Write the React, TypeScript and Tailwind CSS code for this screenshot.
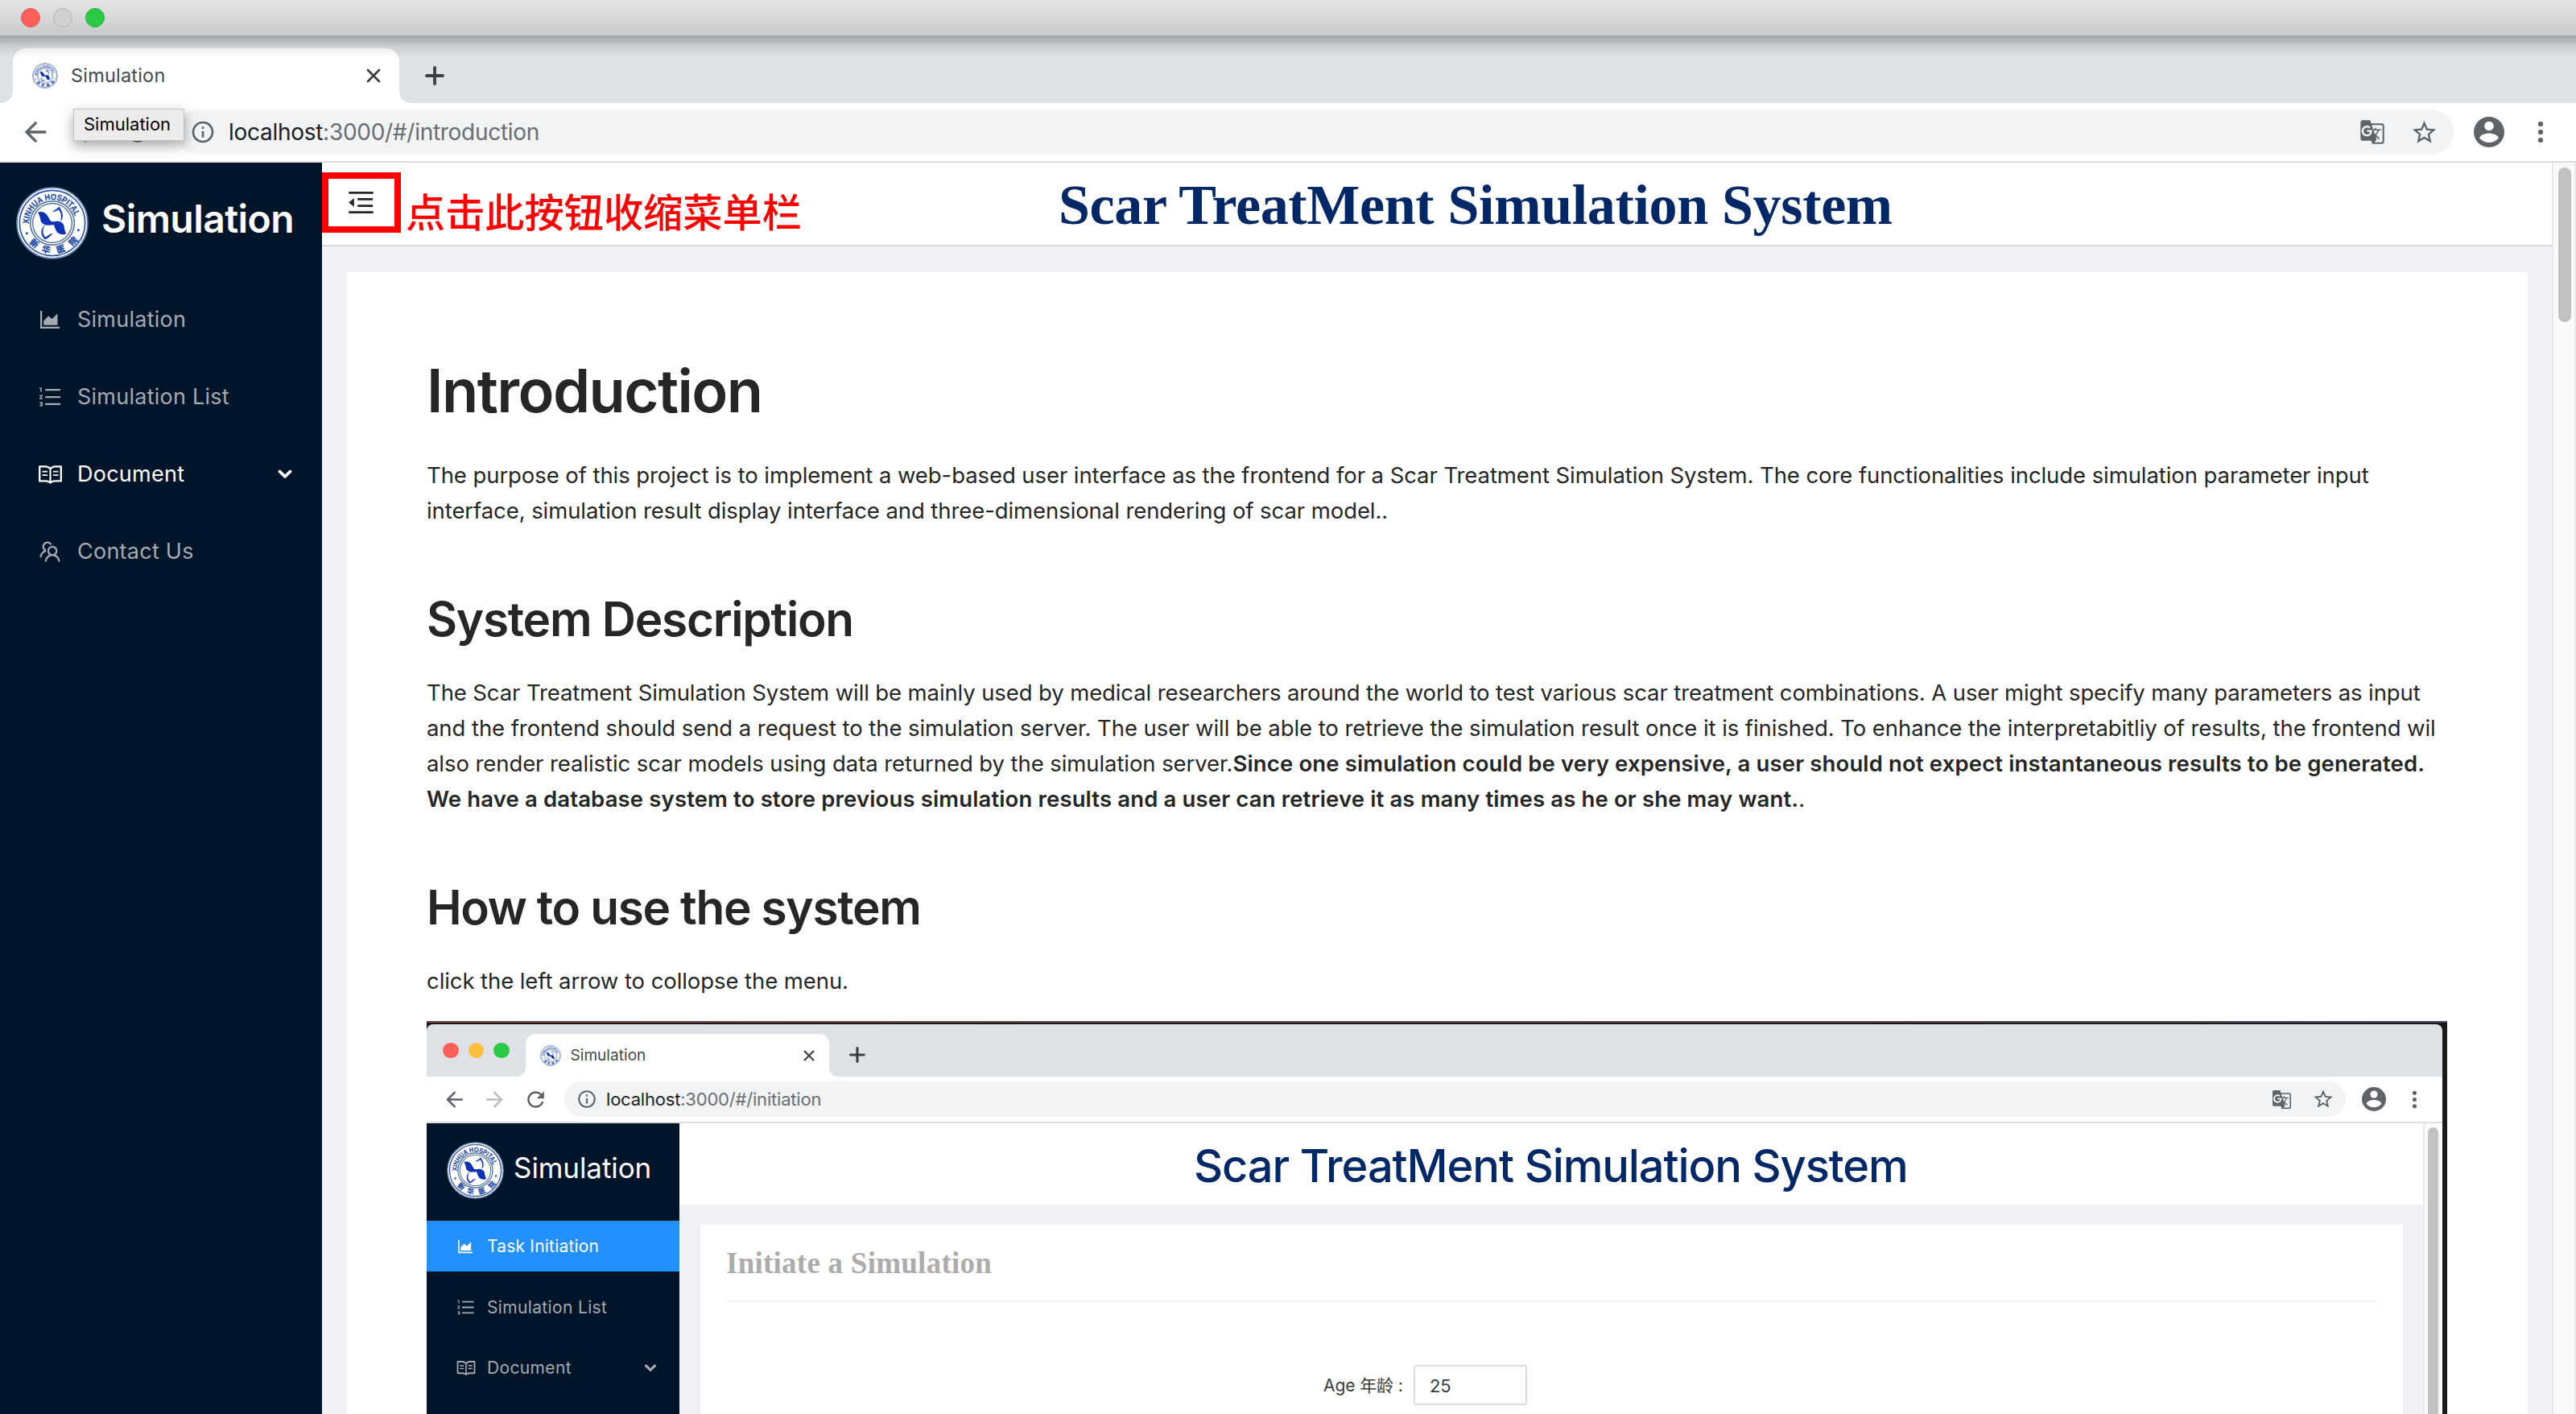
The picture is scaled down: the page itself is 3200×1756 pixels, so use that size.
import React from "react";
import {
  AiOutlineAreaChart,
  AiOutlineMenuFold,
  AiOutlineOrderedList,
  AiOutlineRead,
  AiOutlineTeam,
} from "react-icons/ai";
import { MdArrowBack, MdArrowForward, MdGTranslate, MdInfoOutline, MdRefresh, MdStarBorder } from "react-icons/md";

let sealCount = 0;

/* Round hospital emblem with the lettering running around the ring. */
function Seal({ className }: { className: string }) {
  const [id] = React.useState(() => `seal-arc-${sealCount++}`);
  const hanzi = [
    { c: "新", x: -67, y: 76, r: 41 },
    { c: "华", x: -23, y: 99, r: 13 },
    { c: "医", x: 31, y: 97, r: -18 },
    { c: "院", x: 78, y: 68, r: -48 },
  ];
  return (
    <svg className={className} viewBox="30 35 270 270">
      <circle cx="165" cy="170" r="132" fill="#fff" stroke="#5d7fb4" strokeWidth="5" />
      <circle cx="165" cy="170" r="122" fill="none" stroke="#2f55a4" strokeWidth="5" />
      <circle cx="165" cy="170" r="82" fill="none" stroke="#4a6b9c" strokeWidth="4.5" />
      <circle cx="165" cy="170" r="73" fill="none" stroke="#4a6b9c" strokeWidth="4" />
      <path id={id} d="M78 173 A87 87 0 0 1 250 152" fill="none" />
      <text fontFamily="Liberation Sans, sans-serif" fontWeight="700" fontSize="32" fill="#1d47a5" stroke="#1d47a5" strokeWidth="0.6">
        <textPath href={`#${id}`} textLength="250" lengthAdjust="spacingAndGlyphs">
          XINHUA HOSPITAL
        </textPath>
      </text>
      {hanzi.map((h) => (
        <text
          key={h.c}
          transform={`translate(${165 + h.x} ${170 + h.y}) rotate(${h.r})`}
          textAnchor="middle"
          y="11.5"
          fontFamily="Noto Sans CJK SC, sans-serif"
          fontWeight="700"
          fontSize="32"
          fill="#1d47a5"
          stroke="#1d47a5"
          strokeWidth="1"
        >
          {h.c}
        </text>
      ))}
      <circle cx="70" cy="208" r="4.5" fill="#1d47a5" />
      <circle cx="262" cy="196" r="4.5" fill="#1d47a5" />
      <path
        d="M111 130 C125 124 140 131 146 141 C152 151 156 160 160 164 L172 165 C190 160 205 168 208 179 C210 192 213 204 217 210 C204 216 186 211 180 199 C174 190 173 180 171 177 L150 178 C138 179 122 171 121 158 C119 145 115 135 111 130 Z"
        fill="#0b32b4"
      />
      <path d="M165 127 C174 123 183 117 190 109 C206 132 207 150 196 162 C201 144 198 130 188 119 C182 124 174 128 165 127 Z" fill="#0b32b4" stroke="#0b32b4" />
      <path d="M166 210 C158 216 149 228 138 231 C120 215 121 192 136 178 C126 197 128 212 140 224 C147 220 156 209 166 210 Z" fill="#0b32b4" stroke="#0b32b4" />
    </svg>
  );
}

function Close({ className }: { className: string }) {
  return (
    <svg className={className} viewBox="0 0 18 18" stroke="#3c4043" strokeWidth="2.8" strokeLinecap="round">
      <path d="M2 2 L16 16 M16 2 L2 16" />
    </svg>
  );
}

function Plus({ className }: { className: string }) {
  return (
    <svg className={className} viewBox="0 0 24 24" stroke="#3c4043" strokeWidth="3.8" strokeLinecap="round">
      <path d="M12 2 V22 M2 12 H22" />
    </svg>
  );
}

function Account({ className }: { className: string }) {
  return (
    <svg className={className} viewBox="0 0 38 38">
      <circle cx="19" cy="19" r="19" fill="#5f6368" />
      <circle cx="19" cy="11.5" r="5.8" fill="#fff" />
      <path d="M7.3 26.5 C7.3 22.5 14 20.4 19 20.4 S30.7 22.5 30.7 26.5 C27.5 30.5 23 32 19 32 S10.5 30.5 7.3 26.5 Z" fill="#fff" />
    </svg>
  );
}

function Dots({ className }: { className: string }) {
  return (
    <svg className={className} viewBox="0 0 8 28" fill="#5f6368">
      <circle cx="4" cy="4" r="3.1" />
      <circle cx="4" cy="14" r="3.1" />
      <circle cx="4" cy="24" r="3.1" />
    </svg>
  );
}

function Chevron({ className }: { className: string }) {
  return (
    <svg className={className} viewBox="0 0 18 12" fill="none" stroke="currentColor" strokeWidth="3.8" strokeLinecap="round" strokeLinejoin="round">
      <path d="M2.5 2.5 L9 8.8 L15.5 2.5" />
    </svg>
  );
}

/* Concave corner that joins a tab to the toolbar below it. */
function Foot({ className }: { className: string }) {
  return (
    <svg className={className} viewBox="0 0 16 16" fill="#fff">
      <path d="M16 0 V16 H0 C10 16 16 10 16 0 Z" />
    </svg>
  );
}

function MainMenuItem({ icon, label, active }: { icon: React.ReactNode; label: string; active?: boolean }) {
  return (
    <div className={active ? "flex h-24 items-center pl-[46px] text-white" : "flex h-24 items-center pl-[46px] text-[#a3aab1]"}>
      <span className="w-[50px]">{icon}</span>
      <span className="text-[27px] tracking-[0.25px]">{label}</span>
      {active && <Chevron className="ml-auto mr-[37px] h-3 w-[18px]" />}
    </div>
  );
}

function BrowserTop() {
  return (
    <div>
      <div className="flex h-11 items-center gap-4 bg-linear-to-b from-[#e4e5e7] to-[#c8c9cb] pl-[26px]">
        <i className="size-6 rounded-full border border-[#e2544d] bg-[#ff6059]" />
        <i className="size-6 rounded-full border border-[#b4b4b4] bg-[#d0d0d0]" />
        <i className="size-6 rounded-full border border-[#23b03b] bg-[#2bca44]" />
      </div>
      <div className="relative flex h-[84px] items-end bg-[#dee1e6]">
        <Foot className="size-4" />
        <div className="flex h-[68px] w-[480px] items-center rounded-t-2xl bg-white pl-6">
          <Seal className="size-8" />
          <span className="-mt-px ml-4 text-[23.5px] tracking-[0.2px] text-[#45494d]">Simulation</span>
          <Close className="ml-auto mr-[23px] size-[18px]" />
        </div>
        <Foot className="size-4 -scale-x-100" />
        <Plus className="mb-[22px] ml-4 size-6" />
        <div className="absolute inset-x-0 top-0 h-7 bg-linear-to-b from-black/28 via-black/8 to-transparent" />
      </div>
      <div className="relative flex h-[74px] items-center border-b-2 border-[#dadce0] bg-white pb-0 text-[#5f6368]">
        <MdArrowBack className="ml-6 size-10" />
        <MdArrowForward className="ml-[22px] size-10 text-[#babcbe]" />
        <MdRefresh className="ml-[26px] size-[38px]" />
        <div className="ml-7 flex h-14 flex-1 items-center rounded-full bg-[#f1f3f4] pl-[18px]">
          <MdInfoOutline className="size-8" />
          <span className="ml-4 text-[28px] tracking-[-0.28px] text-[#6b6e72]">
            <span className="text-[#202124]">localhost</span>:3000/#/introduction
          </span>
          <MdGTranslate className="ml-auto size-[32px]" />
          <MdStarBorder className="ml-[31px] mr-[19px] size-[35px]" />
        </div>
        <Account className="ml-[25px] size-[38px]" />
        <Dots className="ml-[41px] mr-10 h-7 w-2" />
        <div className="absolute left-[91px] top-[7px] flex h-10 w-[138px] items-center border border-[#c2c2c2] bg-[#ececec] pl-3 text-[22px] text-black shadow-[0_6px_16px_rgba(0,0,0,0.35)]">
          <span className="-mt-[2px]">Simulation</span>
        </div>
      </div>
    </div>
  );
}

function InnerMenuItem({ icon, label, selected, arrow }: { icon: React.ReactNode; label: string; selected?: boolean; arrow?: boolean }) {
  return (
    <div
      className={
        selected
          ? "mb-[7px] flex h-[63px] shrink-0 items-center bg-[#2290ff] pl-[36px] text-white"
          : "mb-3 flex h-[63px] shrink-0 items-center pl-[36px] text-[#a3aab1]"
      }
    >
      <span className="w-[39px]">{icon}</span>
      <span className={selected ? "text-[21px] tracking-[0.2px]" : "text-[21px] tracking-[0.35px]"}>{label}</span>
      {arrow && <Chevron className="ml-auto mr-7 h-[10px] w-4" />}
    </div>
  );
}

/* Illustration of the task page, shown below the instructions. */
function Illustration() {
  return (
    <div className="flex h-[488px] w-[2510px] flex-col overflow-hidden bg-[#1b1a19] pr-[6px]">
      <div className="-mr-[6px] h-[2px] shrink-0 bg-linear-to-r from-[#7a4547] to-[#4b4858]" />
      <div className="mt-[2px] flex h-[65px] shrink-0 items-end rounded-t-lg bg-[#dee1e6]">
        <div className="flex gap-3 self-center pl-5">
          <i className="size-[19.5px] rounded-full bg-[#ff6059]" />
          <i className="size-[19.5px] rounded-full bg-[#febe3e]" />
          <i className="size-[19.5px] rounded-full bg-[#2bca44]" />
        </div>
        <Foot className="ml-[8px] size-3" />
        <div className="flex h-[53px] w-[377px] items-center rounded-t-xl bg-white pl-[18px]">
          <Seal className="size-[26px]" />
          <span className="ml-3 text-[19px] tracking-[0.05px] text-[#45494d]">Simulation</span>
          <Close className="ml-auto mr-[18px] size-[14px]" />
        </div>
        <Foot className="size-3 -scale-x-100" />
        <Plus className="mb-[17px] ml-[13px] size-5" />
      </div>
      <div className="flex h-[58px] shrink-0 items-center border-b-2 border-[#dcdee1] bg-white text-[#5f6368]">
        <MdArrowBack className="ml-[19px] size-[31px]" />
        <MdArrowForward className="ml-[19px] size-[31px] text-[#babcbe]" />
        <MdRefresh className="ml-[20px] size-[31px]" />
        <div className="ml-[20px] flex h-11 flex-1 items-center rounded-full bg-[#f1f3f4] pl-[15px]">
          <MdInfoOutline className="size-[26px]" />
          <span className="ml-[11px] text-[22px] tracking-[-0.2px] text-[#6b6e72]">
            <span className="text-[#202124]">localhost</span>:3000/#/initiation
          </span>
          <MdGTranslate className="ml-auto size-[25px]" />
          <MdStarBorder className="ml-[25px] mr-[14px] size-[28px]" />
        </div>
        <Account className="ml-5 size-[30px]" />
        <Dots className="ml-8 mr-[31px] h-[23px] w-[7px]" />
      </div>
      <div className="flex min-h-0 flex-1">
        <div className="flex w-[314px] flex-col bg-[#001529]">
          <div className="flex h-[121px] shrink-0 items-start pl-[25px] pt-[23px]">
            <Seal className="size-[71px]" />
            <span className="ml-3 text-[35px] leading-[65px] text-white">Simulation</span>
          </div>
          <InnerMenuItem selected icon={<AiOutlineAreaChart className="size-6" />} label="Task Initiation" />
          <div className="h-[6px] shrink-0" />
          <InnerMenuItem icon={<AiOutlineOrderedList className="size-[25px]" />} label="Simulation List" />
          <InnerMenuItem arrow icon={<AiOutlineRead className="size-[26px]" />} label="Document" />
        </div>
        <div className="flex w-[2166px] flex-col bg-[#f0f1f5]">
          <div className="h-[101px] shrink-0 bg-white pl-[639px] pt-[2px] text-[56px] font-medium leading-[103px] tracking-[-1.12px] text-[#002766]">
            <span className="whitespace-nowrap">Scar TreatMent Simulation System</span>
          </div>
          <div className="ml-[26px] mr-[25px] mt-[25px] flex-1 bg-white px-8">
            <div className="border-b-2 border-[#f0f0f0] pb-[17px] pt-[19px] font-['Liberation_Serif'] text-[37px] font-bold leading-[58px] tracking-[0.25px] text-[#acacac]">
              Initiate a Simulation
            </div>
            <div className="mt-[78px] flex h-[50px] items-center pl-[742px] text-[21px] text-[#3b3b3b]">
              <span className="w-[112px] whitespace-nowrap pt-[2px] font-['Inter','Noto_Sans_CJK_SC',sans-serif]">Age 年龄 :</span>
              <span className="flex h-[50px] w-[141px] items-center rounded-[3px] border-2 border-[#dcdcdc] pl-[18px] pt-[2px] text-[22px]">25</span>
            </div>
          </div>
        </div>
        <div className="flex-1 border-l-2 border-[#e8e8e8] bg-[#fafafa] pl-1 pt-[5px]">
          <div className="h-[400px] w-[13px] rounded-full bg-[#c1c1c1]" />
        </div>
      </div>
    </div>
  );
}

export default function App() {
  return (
    <div className="flex h-[1756px] w-[3200px] flex-col overflow-hidden bg-white font-['Inter',sans-serif] text-[#262626]">
      <BrowserTop />
      <div className="flex min-h-0 flex-1">
        <aside className="w-[400px] shrink-0 bg-[#001529]">
          <div className="flex h-[147px] pl-[20px] pt-[30px]">
            <Seal className="size-[90px]" />
            <span className="ml-4 text-[48px] font-semibold leading-[80px] tracking-[-0.55px] text-white">Simulation</span>
          </div>
          <MainMenuItem icon={<AiOutlineAreaChart className="size-8" />} label="Simulation" />
          <MainMenuItem icon={<AiOutlineOrderedList className="size-8" />} label="Simulation List" />
          <MainMenuItem active icon={<AiOutlineRead className="size-[33px]" />} label="Document" />
          <MainMenuItem icon={<AiOutlineTeam className="size-8" />} label="Contact Us" />
        </aside>
        <main className="flex w-[2770px] shrink-0 flex-col bg-[#f0f1f5]">
          <header className="flex h-[104px] shrink-0 items-start whitespace-nowrap border-b-2 border-[#d9dadc] bg-white">
            <div className="mt-3 flex h-[75px] w-[98px] items-center justify-center border-8 border-[#ff0000]">
              <AiOutlineMenuFold className="-ml-[2px] size-[39px]" />
            </div>
            <span className="ml-[6px] mt-[29px] w-[494px] font-['Noto_Sans_CJK_SC',sans-serif] text-[49.2px] font-medium leading-[60px] text-[#ff0000]">
              点击此按钮收缩菜单栏
            </span>
            <h1 className="ml-[317px] mt-[3px] font-['Liberation_Serif'] text-[70px] font-bold leading-[100px] tracking-[-0.34px] text-[#002766]">
              Scar TreatMent Simulation System
            </h1>
          </header>
          <article className="ml-[30px] mr-[30px] mt-8 flex-1 overflow-hidden whitespace-nowrap bg-white pl-[100px] pt-[102px] text-[27.5px] leading-[44px] tracking-[-0.08px]">
            <h1 className="text-[74px] font-semibold leading-[90px] tracking-[-1.55px]">Introduction</h1>
            <p className="mt-[38px]">
              The purpose of this project is to implement a web-based user interface as the frontend for a Scar Treatment Simulation System. The core functionalities include simulation parameter input
              <br />
              interface, simulation result display interface and three-dimensional rendering of scar model..
            </p>
            <h2 className="mt-[77px] text-[58.5px] font-semibold leading-[72px] tracking-[-1.27px]">System Description</h2>
            <p className="mt-[33px]">
              <span className="tracking-[-0.115px]">
                The Scar Treatment Simulation System will be mainly used by medical researchers around the world to test various scar treatment combinations. A user might specify many parameters as input
              </span>
              <br />
              <span className="tracking-[-0.07px]">
                and the frontend should send a request to the simulation server. The user will be able to retrieve the simulation result once it is finished. To enhance the interpretabitliy of results, the frontend wil
              </span>
              <br />
              also render realistic scar models using data returned by the simulation server.
              <strong className="font-semibold tracking-[0.14px]">
                Since one simulation could be very expensive, a user should not expect instantaneous results to be generated.
                <br />
                We have a database system to store previous simulation results and a user can retrieve it as many times as he or she may want.
              </strong>
              .
            </p>
            <h2 className="mt-[77px] text-[58.5px] font-semibold leading-[72px] tracking-[-1.35px]">How to use the system</h2>
            <p className="mb-7 mt-[33px]">click the left arrow to collopse the menu.</p>
            <Illustration />
          </article>
        </main>
        <div className="flex-1 border-l-2 border-r-2 border-[#e8e8e8] bg-[#fafafa] pl-[6px] pt-[6px]">
          <div className="h-48 w-4 rounded-full bg-[#c1c1c1]" />
        </div>
      </div>
    </div>
  );
}
